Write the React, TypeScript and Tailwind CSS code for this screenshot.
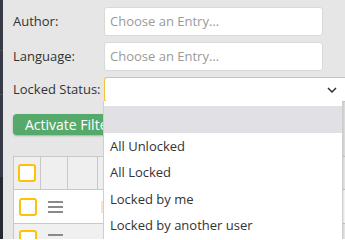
import React from 'react'

const font = { fontFamily: '"Open Sans", "Liberation Sans", sans-serif' }

function Checkbox() {
  return <div className="h-[18px] w-[18px] rounded-[3px] border-2 border-[#ffc107] bg-white" />
}

function Hamburger() {
  return (
    <div className="flex w-[15px] flex-col gap-[3px]">
      <div className="h-[2px] bg-[#8a8a8a]" />
      <div className="h-[2px] bg-[#8a8a8a]" />
      <div className="h-[2px] bg-[#8a8a8a]" />
    </div>
  )
}

function Field({ label, placeholder }: { label: string; placeholder: string }) {
  return (
    <div className="flex items-center">
      <label className="w-[91px] text-[13px] text-[#333]">{label}</label>
      <div className="flex h-[29px] w-[219px] items-center rounded-[3px] border border-[#d9d9d9] bg-white px-[5px] text-[13px] text-[#9a9a9a]">
        {placeholder}
      </div>
    </div>
  )
}

const options = ['All Unlocked', 'All Locked', 'Locked by me', 'Locked by another user']

export default function App() {
  return (
    <div className="relative flex h-[239px] w-[345px] overflow-hidden bg-[#e6e6e6]" style={font}>
      <div className="flex w-[3px] shrink-0 flex-col bg-[#363b47]">
        <div className="h-[50px]" />
        <div className="h-px bg-[#4a4f5b]" />
        <div className="h-[43px]" />
        <div className="h-px bg-[#4a4f5b]" />
        <div className="h-[82px]" />
        <div className="flex-1 bg-[#272a33]" />
      </div>

      <div className="flex flex-1 flex-col pl-[10px] pt-[7px]">
        <div className="flex flex-col gap-[6px]">
          <Field label="Author:" placeholder="Choose an Entry…" />
          <Field label="Language:" placeholder="Choose an Entry…" />
          <div className="flex items-center">
            <label className="w-[91px] text-[13px] text-[#333]">Locked Status:</label>
            <div className="flex h-[25px] flex-1 items-center justify-end rounded-l-[3px] border border-r-0 border-[#f5c33b] bg-white pr-[8px]">
              <svg width="10" height="6" viewBox="0 0 10 6" fill="none">
                <path d="M1 1l4 4 4-4" stroke="#333" strokeWidth="1.5" />
              </svg>
            </div>
          </div>
        </div>

        <button className="mt-[12px] flex h-[26px] w-[130px] items-center rounded-[4px] bg-[#55a96b] pl-[12px] text-[14px] text-white shadow-[0_1px_2px_rgba(0,0,0,0.25)]">
          Activate Filter
        </button>

        <div className="mt-[21px] flex flex-col">
          <div className="flex h-[34px] border-y border-l border-[#c8c8c8] bg-[#efefef]">
            <div className="flex w-[27px] items-center justify-center border-r border-[#c8c8c8]">
              <Checkbox />
            </div>
            <div className="w-[27px] border-r border-[#c8c8c8]" />
            <div className="w-[30px] border-r border-[#c8c8c8]" />
            <div className="flex-1" />
          </div>
          <div className="flex h-[34px] items-center border-b border-l border-[#c8c8c8] bg-white">
            <div className="flex w-[27px] justify-center">
              <Checkbox />
            </div>
            <div className="flex w-[27px] justify-center pl-[2px]">
              <Hamburger />
            </div>
            <div className="ml-[33px] h-[12px] w-[2px] bg-[#fbe3d4]" />
          </div>
          <div className="flex h-[34px] items-start border-l border-[#c8c8c8] bg-[#f0f0f0] pt-[6px]">
            <div className="flex w-[27px] justify-center">
              <Checkbox />
            </div>
            <div className="flex w-[27px] justify-center pl-[2px] pt-[4px]">
              <Hamburger />
            </div>
          </div>
        </div>
      </div>

      <div className="absolute left-[103px] top-[101px] w-[240px] border-l border-r border-[#cfcfcf] bg-white pt-[5px] text-[13px] text-[#333] shadow-[1px_1px_2px_rgba(0,0,0,0.15)]">
        <div className="h-[27px] bg-[#e1e1e5]" />
        {options.map((o) => (
          <div key={o} className="flex h-[26.5px] items-center pl-[6px]">
            {o}
          </div>
        ))}
      </div>
    </div>
  )
}
